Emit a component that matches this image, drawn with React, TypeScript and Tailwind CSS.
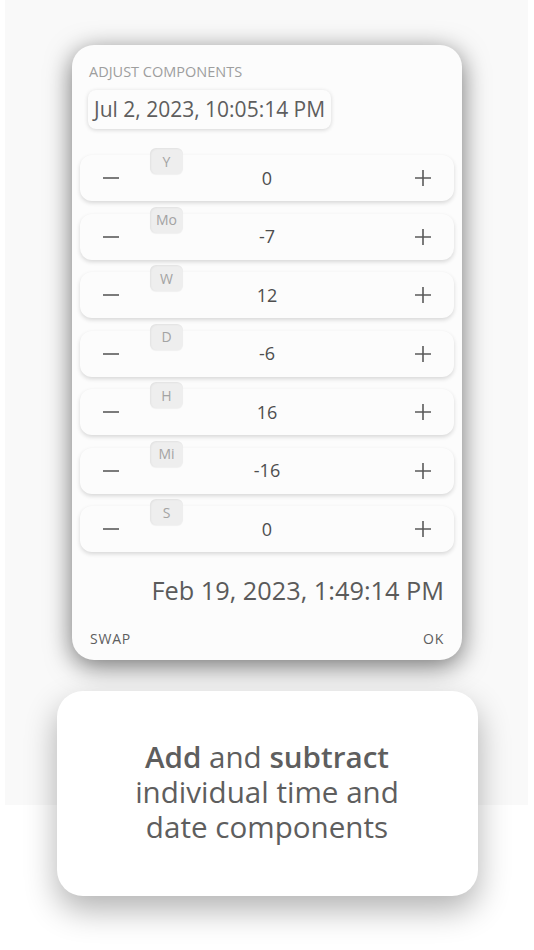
import React from "react";

const rows = [
  { label: "Y", value: "0" },
  { label: "Mo", value: "-7" },
  { label: "W", value: "12" },
  { label: "D", value: "-6" },
  { label: "H", value: "16" },
  { label: "Mi", value: "-16" },
  { label: "S", value: "0" },
];

function Minus() {
  return (
    <svg width="18" height="18" viewBox="0 0 18 18" className="text-[#5a5a5a]">
      <path d="M1 9h16" stroke="currentColor" strokeWidth="1.6" />
    </svg>
  );
}

function Plus() {
  return (
    <svg width="18" height="18" viewBox="0 0 18 18" className="text-[#5a5a5a]">
      <path d="M1 9h16M9 1v16" stroke="currentColor" strokeWidth="1.6" />
    </svg>
  );
}

export default function App() {
  return (
    <div className="relative w-[534px] h-[950px] bg-white overflow-hidden" style={{ fontFamily: "'Open Sans', 'Noto Sans', sans-serif" }}>
      {/* light backdrop */}
      <div className="absolute left-[5px] top-0 w-[523px] h-[805px] bg-[#f9f9f9]" />

      <div className="relative flex flex-col items-center">
        {/* Dialog */}
        <div className="mt-[45px] w-[390px] h-[615px] rounded-[22px] bg-[#fcfcfc] shadow-[0_6px_26px_rgba(0,0,0,0.55)] flex flex-col">
          <div className="pt-[17px] pl-[17px] text-[14.5px] leading-[20px] text-[#9e9e9e]">ADJUST COMPONENTS</div>

          <div className="ml-[16px] mt-[8px] self-start h-[39px] px-[6px] flex items-center rounded-[8px] bg-[#fcfcfc] shadow-[0_1px_4px_rgba(0,0,0,0.16)] text-[21px] text-[#5e5e5e]">
            Jul 2, 2023, 10:05:14 PM
          </div>

          <div className="mt-[26px] mx-[8px] flex flex-col gap-[12.5px]">
            {rows.map((r) => (
              <div key={r.label} className="relative h-[46px] rounded-[12px] bg-[#fcfcfc] shadow-[0_2px_4px_rgba(0,0,0,0.15)] flex items-center justify-between px-[22px]">
                <div className="absolute left-[70px] top-[-7px] w-[33px] h-[26px] rounded-[6px] bg-[#eeeeee] shadow-[inset_1px_1px_2px_rgba(0,0,0,0.05),0_1px_1px_rgba(0,0,0,0.05)] flex items-center justify-center text-[14px] text-[#a3a3a3]">
                  {r.label}
                </div>
                <Minus />
                <span className="text-[18px] text-[#4e4e4e]">{r.value}</span>
                <Plus />
              </div>
            ))}
          </div>

          <div className="mt-[22px] pr-[18px] text-right text-[25.3px] leading-[32px] text-[#5a5a5a]">
            Feb 19, 2023, 1:49:14 PM
          </div>

          <div className="mt-[22px] px-[18px] flex justify-between text-[14px] font-medium tracking-[0.8px] text-[#5e5e5e]">
            <span>SWAP</span>
            <span>OK</span>
          </div>
        </div>

        {/* Caption card */}
        <div className="mt-[31px] w-[421px] h-[205px] rounded-[26px] bg-white shadow-[0_14px_32px_rgba(0,0,0,0.3)] flex items-center justify-center pb-[5px]">
          <p className="text-center text-[29.6px] leading-[35px] text-[#5e5e5e]">
            <span className="font-semibold">Add</span> and <span className="font-semibold">subtract</span>
            <br />
            individual time and
            <br />
            date components
          </p>
        </div>
      </div>
    </div>
  );
}
